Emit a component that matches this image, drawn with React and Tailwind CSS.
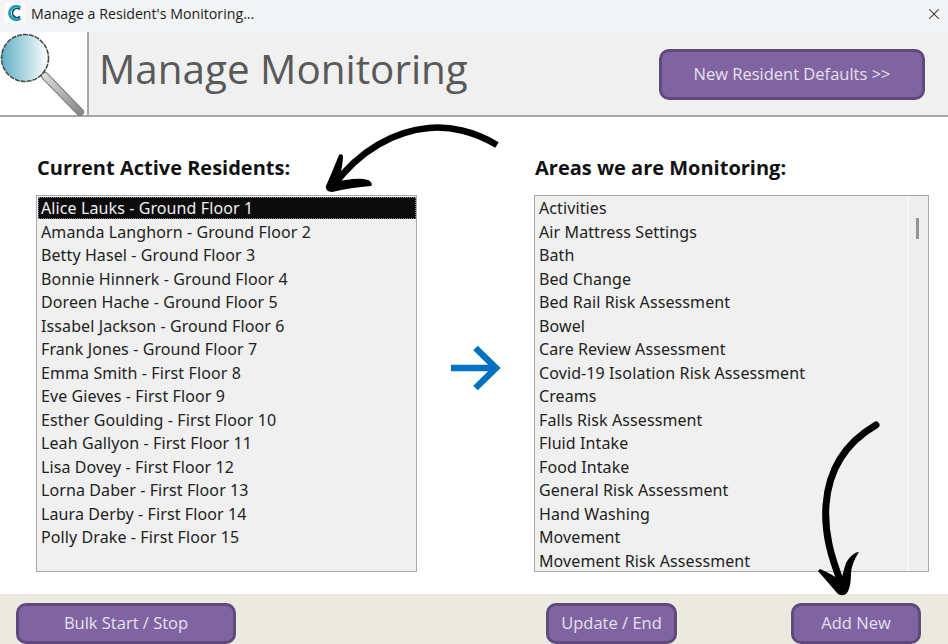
import { X } from 'lucide-react';

const residents = [
  'Alice Lauks - Ground Floor 1',
  'Amanda Langhorn - Ground Floor 2',
  'Betty Hasel - Ground Floor 3',
  'Bonnie Hinnerk - Ground Floor 4',
  'Doreen Hache - Ground Floor 5',
  'Issabel Jackson - Ground Floor 6',
  'Frank Jones - Ground Floor 7',
  'Emma Smith - First Floor 8',
  'Eve Gieves - First Floor 9',
  'Esther Goulding - First Floor 10',
  'Leah Gallyon - First Floor 11',
  'Lisa Dovey - First Floor 12',
  'Lorna Daber - First Floor 13',
  'Laura Derby - First Floor 14',
  'Polly Drake - First Floor 15',
];

const areas = [
  'Activities',
  'Air Mattress Settings',
  'Bath',
  'Bed Change',
  'Bed Rail Risk Assessment',
  'Bowel',
  'Care Review Assessment',
  'Covid-19 Isolation Risk Assessment',
  'Creams',
  'Falls Risk Assessment',
  'Fluid Intake',
  'Food Intake',
  'General Risk Assessment',
  'Hand Washing',
  'Movement',
  'Movement Risk Assessment',
];

const PurpleButton = ({ children, className = '' }) => (
  <button className={`flex items-center justify-center rounded-[10px] border-[3px] border-[#604a7b] bg-[#8064a2] text-[16.5px] text-[#e6e0ec] ${className}`}>
    {children}
  </button>
);

const Row = ({ children, selected }) => (
  <div
    className={`shrink-0 whitespace-nowrap font-['Noto_Sans',sans-serif] text-[16px] tracking-[0.1px] ${
      selected
        ? 'mb-[1.53px] h-[22px] border border-dotted border-[#8a8a8a] bg-[#0c0c0c] pl-[2px] leading-[20px] text-[#f0f0f0]'
        : 'h-[23.53px] pl-[3px] leading-[22px] text-[#222222]'
    }`}
  >
    {children}
  </div>
);

const AppLogo = () => (
  <svg width="20" height="20" viewBox="0 0 20 20" className="bg-white">
    <path d="M15.5 4.6 A6.8 6.8 0 1 0 15.5 15.4" fill="none" stroke="#17a2b8" strokeWidth="3" />
    <path d="M15 6.6 A4.5 4.5 0 1 0 15 13.4" fill="none" stroke="#1b3a5c" strokeWidth="1.6" />
  </svg>
);

const Magnifier = () => (
  <svg width="88" height="84" viewBox="0 0 88 84">
    <defs>
      <linearGradient id="lens" x1="0" y1="0" x2="1" y2="0">
        <stop offset="0" stopColor="#5fb0c5" />
        <stop offset="1" stopColor="#ffffff" />
      </linearGradient>
      <linearGradient id="handle" x1="0" y1="0" x2="1" y2="1">
        <stop offset="0" stopColor="#d9d9d9" />
        <stop offset="1" stopColor="#8a8a8a" />
      </linearGradient>
    </defs>
    <path d="M45 44 L80 80" stroke="#7a7a7a" strokeWidth="8" strokeLinecap="round" />
    <path d="M45 44 L80 80" stroke="url(#handle)" strokeWidth="6" strokeLinecap="round" />
    <circle cx="25" cy="26" r="23.5" fill="url(#lens)" stroke="#4a4a4a" strokeWidth="1.6" strokeDasharray="5 1" />
  </svg>
);

// hand drawn arrow above the left list
const ArrowToResidents = () => (
  <svg width="176" height="72" viewBox="0 0 176 72" className="absolute left-[324px] top-[123px]">
    <path
      d="M173 22 C150 8 125 3 105 5 C70 8 35 28 10 62"
      fill="none"
      stroke="#000"
      strokeWidth="6.5"
    />
    <path
      d="M15 32 C11 42 6 54 2 63 C1 66 4 69 8 69 C20 66 34 64 47 63 C49 62 47 58 44 57 C34 54 22 57 14 58 C17 50 19 40 19 33 C18 31 16 31 15 32 Z"
      fill="#000"
    />
  </svg>
);

// hand drawn arrow down to the add new button
const ArrowToAddNew = () => (
  <svg width="64" height="178" viewBox="0 0 64 178" className="absolute left-[817px] top-[421px]">
    <path
      d="M59 4 C35 18 12 42 9 84 C7 112 14 136 25 164"
      fill="none"
      stroke="#000"
      strokeWidth="7"
      strokeLinecap="round"
    />
    <path
      d="M1 150 C8 158 15 166 20 172 C23 175 27 175 30 172 C33 168 34 160 34 152 C35 142 40 134 42 131 C38 131 33 135 29 142 C27 148 25 155 24 160 C18 155 10 151 3 148 Z"
      fill="#000"
    />
  </svg>
);

const BlueArrow = () => (
  <svg width="50" height="46" viewBox="0 0 50 46">
    <path d="M0 23 H45 M24.5 3 L45 23 L24.5 43" fill="none" stroke="#0070c0" strokeWidth="6.5" />
  </svg>
);

const App = () => {
  return (
    <div className="relative flex h-[644px] w-[948px] flex-col overflow-hidden bg-white font-['Open_Sans',sans-serif]">
      <div className="flex h-[32px] items-center justify-between bg-[#f3f4f6] pb-[5px] pl-[5px] pr-[5px]">
        <div className="flex items-center gap-[6px]">
          <AppLogo />
          <span className="text-[14.2px] text-[#1a1a1a]">Manage a Resident's Monitoring...</span>
        </div>
        <X size={18} strokeWidth={1.4} className="text-[#222222]" />
      </div>

      <div className="flex h-[85px] items-center border-b-2 border-[#a6a6a6] bg-[#f0f0f0]">
        <div className="h-full w-[89px] border-r-2 border-[#a6a6a6] bg-white">
          <Magnifier />
        </div>
        <h1 className="mb-[8px] ml-[10px] text-[40.4px] leading-none text-[#595959]">Manage Monitoring</h1>
        <PurpleButton className="ml-auto mr-[23px] mt-[2px] h-[51px] w-[266px]">New Resident Defaults &gt;&gt;</PurpleButton>
      </div>

      <div className="flex flex-1 pl-[36px] pr-[19px] pt-[35px]">
        <div className="flex w-[381px] flex-col">
          <h2 className="mb-[12px] ml-px h-[31px] text-[20px] font-bold leading-[31px] text-[#111111]">Current Active Residents:</h2>
          <div className="flex h-[377px] flex-col border border-[#a9a9a9] bg-[#f0f0f0] py-px pl-px">
            {residents.map((name, i) => (
              <Row key={name} selected={i === 0}>{name}</Row>
            ))}
          </div>
        </div>

        <div className="flex w-[117px] items-center justify-center pb-[11px]">
          <BlueArrow />
        </div>

        <div className="flex w-[395px] flex-col">
          <h2 className="mb-[12px] ml-px h-[31px] text-[20px] font-bold leading-[31px] text-[#111111]">Areas we are Monitoring:</h2>
          <div className="flex h-[377px] border border-[#a9a9a9] bg-[#f0f0f0]">
            <div className="flex flex-1 flex-col pl-px pt-px">
              {areas.map((name) => (
                <Row key={name}>{name}</Row>
              ))}
            </div>
            <div className="w-[21px] border-l-2 border-[#f7f7f7] bg-[#eeeeee] pl-[7px] pt-[22px]">
              <div className="h-[21px] w-[3px] bg-[#969696]" />
            </div>
          </div>
        </div>
      </div>

      <div className="flex h-[50px] items-center bg-[#ece9e0] pl-[16px] pt-[8px]">
        <PurpleButton className="h-[41px] w-[220px] leading-none">Bulk Start / Stop</PurpleButton>
        <PurpleButton className="ml-[310px] h-[41px] w-[131px] leading-none">Update / End</PurpleButton>
        <PurpleButton className="ml-[114px] h-[41px] w-[130px] leading-none">Add New</PurpleButton>
      </div>

      <ArrowToResidents />
      <ArrowToAddNew />
    </div>
  );
};

export default App;
